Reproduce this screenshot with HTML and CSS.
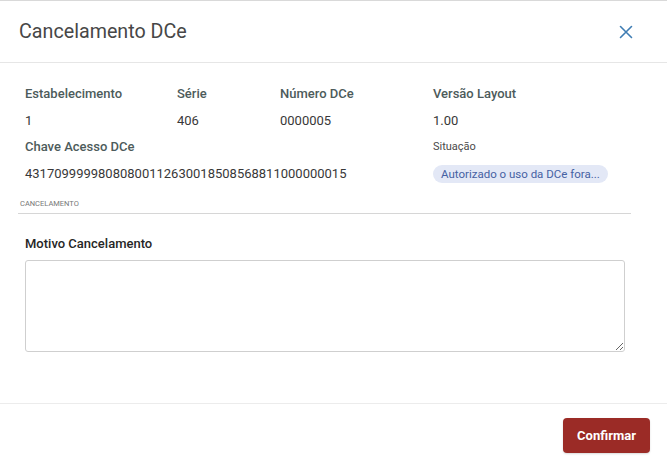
FILE: index.html
```html
<!DOCTYPE html>
<html lang="pt-BR">
<head>
<meta charset="utf-8">
<title>Cancelamento DCe</title>
<link rel="stylesheet" href="styles.css">
</head>
<body>
<div class="dialog">
  <header class="dialog-header">
    <h1 class="dialog-title">Cancelamento DCe</h1>
    <button class="close-btn" aria-label="Fechar">
      <svg width="14" height="14" viewBox="0 0 14 14"><path d="M1.5 1.5 L12.5 12.5 M12.5 1.5 L1.5 12.5" stroke="#3f7db3" stroke-width="1.6" stroke-linecap="round" fill="none"/></svg>
    </button>
  </header>
  <main class="dialog-body">
    <div class="info-grid">
      <div class="label">Estabelecimento</div>
      <div class="label">Série</div>
      <div class="label">Número DCe</div>
      <div class="label">Versão Layout</div>
      <div class="value">1</div>
      <div class="value">406</div>
      <div class="value">0000005</div>
      <div class="value">1.00</div>
      <div class="label span3">Chave Acesso DCe</div>
      <div class="label-small">Situação</div>
      <div class="value span3">43170999998080800112630018508568811000000015</div>
      <div class="value"><span class="badge">Autorizado o uso da DCe fora...</span></div>
    </div>
    <div class="section-title">CANCELAMENTO</div>
    <div class="field">
      <label class="field-label" for="motivo">Motivo Cancelamento</label>
      <textarea id="motivo" class="textarea"></textarea>
    </div>
  </main>
  <footer class="dialog-footer">
    <button class="btn-confirm">Confirmar</button>
  </footer>
</div>
</body>
</html>
```
FILE: styles.css
```css
* { box-sizing: border-box; }
html, body { margin: 0; padding: 0; background: #fff; }
body { font-family: Roboto, "Noto Sans", "Liberation Sans", sans-serif; width: 667px; height: 456px; overflow: hidden; }

.dialog { border-top: 1px solid #d9d9d9; }

.dialog-header {
  height: 62px;
  display: flex;
  align-items: center;
  justify-content: space-between;
  padding: 0 34px 0 19px;
  border-bottom: 1px solid #e6e6e6;
}
.dialog-title {
  margin: 0;
  font-size: 19.7px;
  font-weight: 400;
  color: #474747;
}
.close-btn {
  border: 0;
  background: none;
  padding: 0;
  width: 14px;
  height: 14px;
  display: flex;
  cursor: pointer;
}

.dialog-body { padding: 23px 36px 0 18px; height: 340px; }

.info-grid {
  display: grid;
  grid-template-columns: 152px 103px 153px 1fr;
  row-gap: 10.5px;
  padding-left: 7px;
  line-height: 16px;
}
.label { font-size: 13px; font-weight: 500; color: #4d5b5b; }
.label-small { font-size: 11px; color: #4a4a4a; }
.value { font-size: 13px; color: #383838; }
.span3 { grid-column: span 3; }
.badge {
  display: inline-block;
  background: #e3e8f6;
  color: #4561a3;
  font-size: 11.5px;
  line-height: 18px;
  height: 18px;
  padding: 0 8px;
  border-radius: 9px;
  margin-top: -1px;
  vertical-align: top;
}

.section-title {
  margin-top: 17.5px;
  font-size: 7.5px;
  color: #777;
  padding: 0 2px 5px;
  border-bottom: 1px solid #d6d6d6;
  line-height: 8px;
}

.field { padding: 22px 0 0 7px; }
.field-label {
  display: block;
  font-size: 13px;
  font-weight: 500;
  color: #262626;
  line-height: 16px;
  margin-bottom: 8px;
}
.textarea {
  display: block;
  width: 600px;
  height: 92px;
  border: 1px solid #cfcfcf;
  border-radius: 3px;
  resize: vertical;
  font: inherit;
}

.dialog-footer {
  border-top: 1px solid #ececec;
  display: flex;
  justify-content: flex-end;
  padding: 14px 17px 0 0;
}
.btn-confirm {
  width: 87px;
  height: 35px;
  border: 0;
  border-radius: 4px;
  background: #9b2b26;
  color: #fff;
  font-family: inherit;
  font-size: 13px;
  font-weight: 700;
  box-shadow: 0 1px 2px rgba(0,0,0,0.15);
}
```
